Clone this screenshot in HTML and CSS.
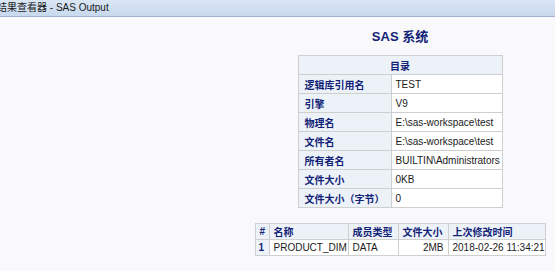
FILE: index.html
```html
<!DOCTYPE html>
<html lang="zh">
<head>
<meta charset="utf-8">
<title>SAS Output</title>
<link rel="stylesheet" href="styles.css">
</head>
<body>
<div class="titlebar"><span class="titletext">结果查看器 - SAS Output</span></div>
<div class="page">
  <div class="systitle">SAS 系统</div>
  <table class="info">
    <colgroup><col class="c-label"><col class="c-value"></colgroup>
    <thead><tr><th colspan="2" class="head center">目录</th></tr></thead>
    <tbody>
      <tr><th class="rowhead">逻辑库引用名</th><td>TEST</td></tr>
      <tr><th class="rowhead">引擎</th><td>V9</td></tr>
      <tr><th class="rowhead">物理名</th><td>E:\sas-workspace\test</td></tr>
      <tr><th class="rowhead">文件名</th><td>E:\sas-workspace\test</td></tr>
      <tr><th class="rowhead">所有者名</th><td>BUILTIN\Administrators</td></tr>
      <tr><th class="rowhead">文件大小</th><td>0KB</td></tr>
      <tr><th class="rowhead">文件大小（字节）</th><td>0</td></tr>
    </tbody>
  </table>
  <table class="members">
    <colgroup><col class="m1"><col class="m2"><col class="m3"><col class="m4"><col class="m5"></colgroup>
    <thead>
      <tr><th class="head">#</th><th class="head">名称</th><th class="head">成员类型</th><th class="head">文件大小</th><th class="head">上次修改时间</th></tr>
    </thead>
    <tbody>
      <tr><th class="rowhead">1</th><td>PRODUCT_DIM</td><td>DATA</td><td class="right">2MB</td><td>2018-02-26 11:34:21</td></tr>
    </tbody>
  </table>
</div>
</body>
</html>
```

FILE: styles.css
```css
html, body {
  margin: 0;
  padding: 0;
  background: #f9f9fb;
  overflow: hidden;
}
body {
  width: 555px;
  height: 271px;
}
.titlebar {
  height: 16px;
  border-bottom: 1px solid #9fb3cc;
  background: linear-gradient(#dbe6f4, #c8d9ee);
  overflow: hidden;
  white-space: nowrap;
}
.titletext {
  display: block;
  margin-left: -3px;
  font-family: "Liberation Sans", "Noto Sans CJK SC", sans-serif;
  font-size: 10px;
  line-height: 16px;
  color: #1a1a1a;
}
.page {
  width: 800px;
  display: flex;
  flex-direction: column;
  align-items: center;
  font-family: "Liberation Sans", Arial, "Noto Sans CJK SC", sans-serif;
}
.systitle {
  margin-top: 12px;
  font-size: 13px;
  line-height: 16px;
  font-weight: bold;
  color: #112277;
}
table {
  border-collapse: collapse;
  table-layout: fixed;
  border: 1px solid #c1c1c1;
  font-size: 10px;
}
th, td {
  border: 1px solid #cfcfcf;
  padding: 0 4px;
  text-align: left;
  white-space: nowrap;
  overflow: hidden;
}
td {
  background: #ffffff;
  color: #1a1a1a;
  font-weight: normal;
}
.head, .rowhead {
  background: #edf2f9;
  color: #112277;
  font-weight: bold;
}
.rowhead {
  padding-left: 6px;
}
.center { text-align: center; }
.right { text-align: right; }
.info {
  margin-top: 10px;
  width: 204px;
}
.info th, .info td {
  height: 18px;
}
.c-label { width: 93px; }
.c-value { width: 111px; }
.members {
  margin-top: 15px;
  width: 290px;
}
.members th, .members td {
  height: 15px;
  padding: 0 4px;
}
.members .rowhead { padding: 0 3px; }
.m1 { width: 14px; }
.m2 { width: 79px; }
.m3 { width: 50px; }
.m4 { width: 50px; }
.m5 { width: 97px; }
```
